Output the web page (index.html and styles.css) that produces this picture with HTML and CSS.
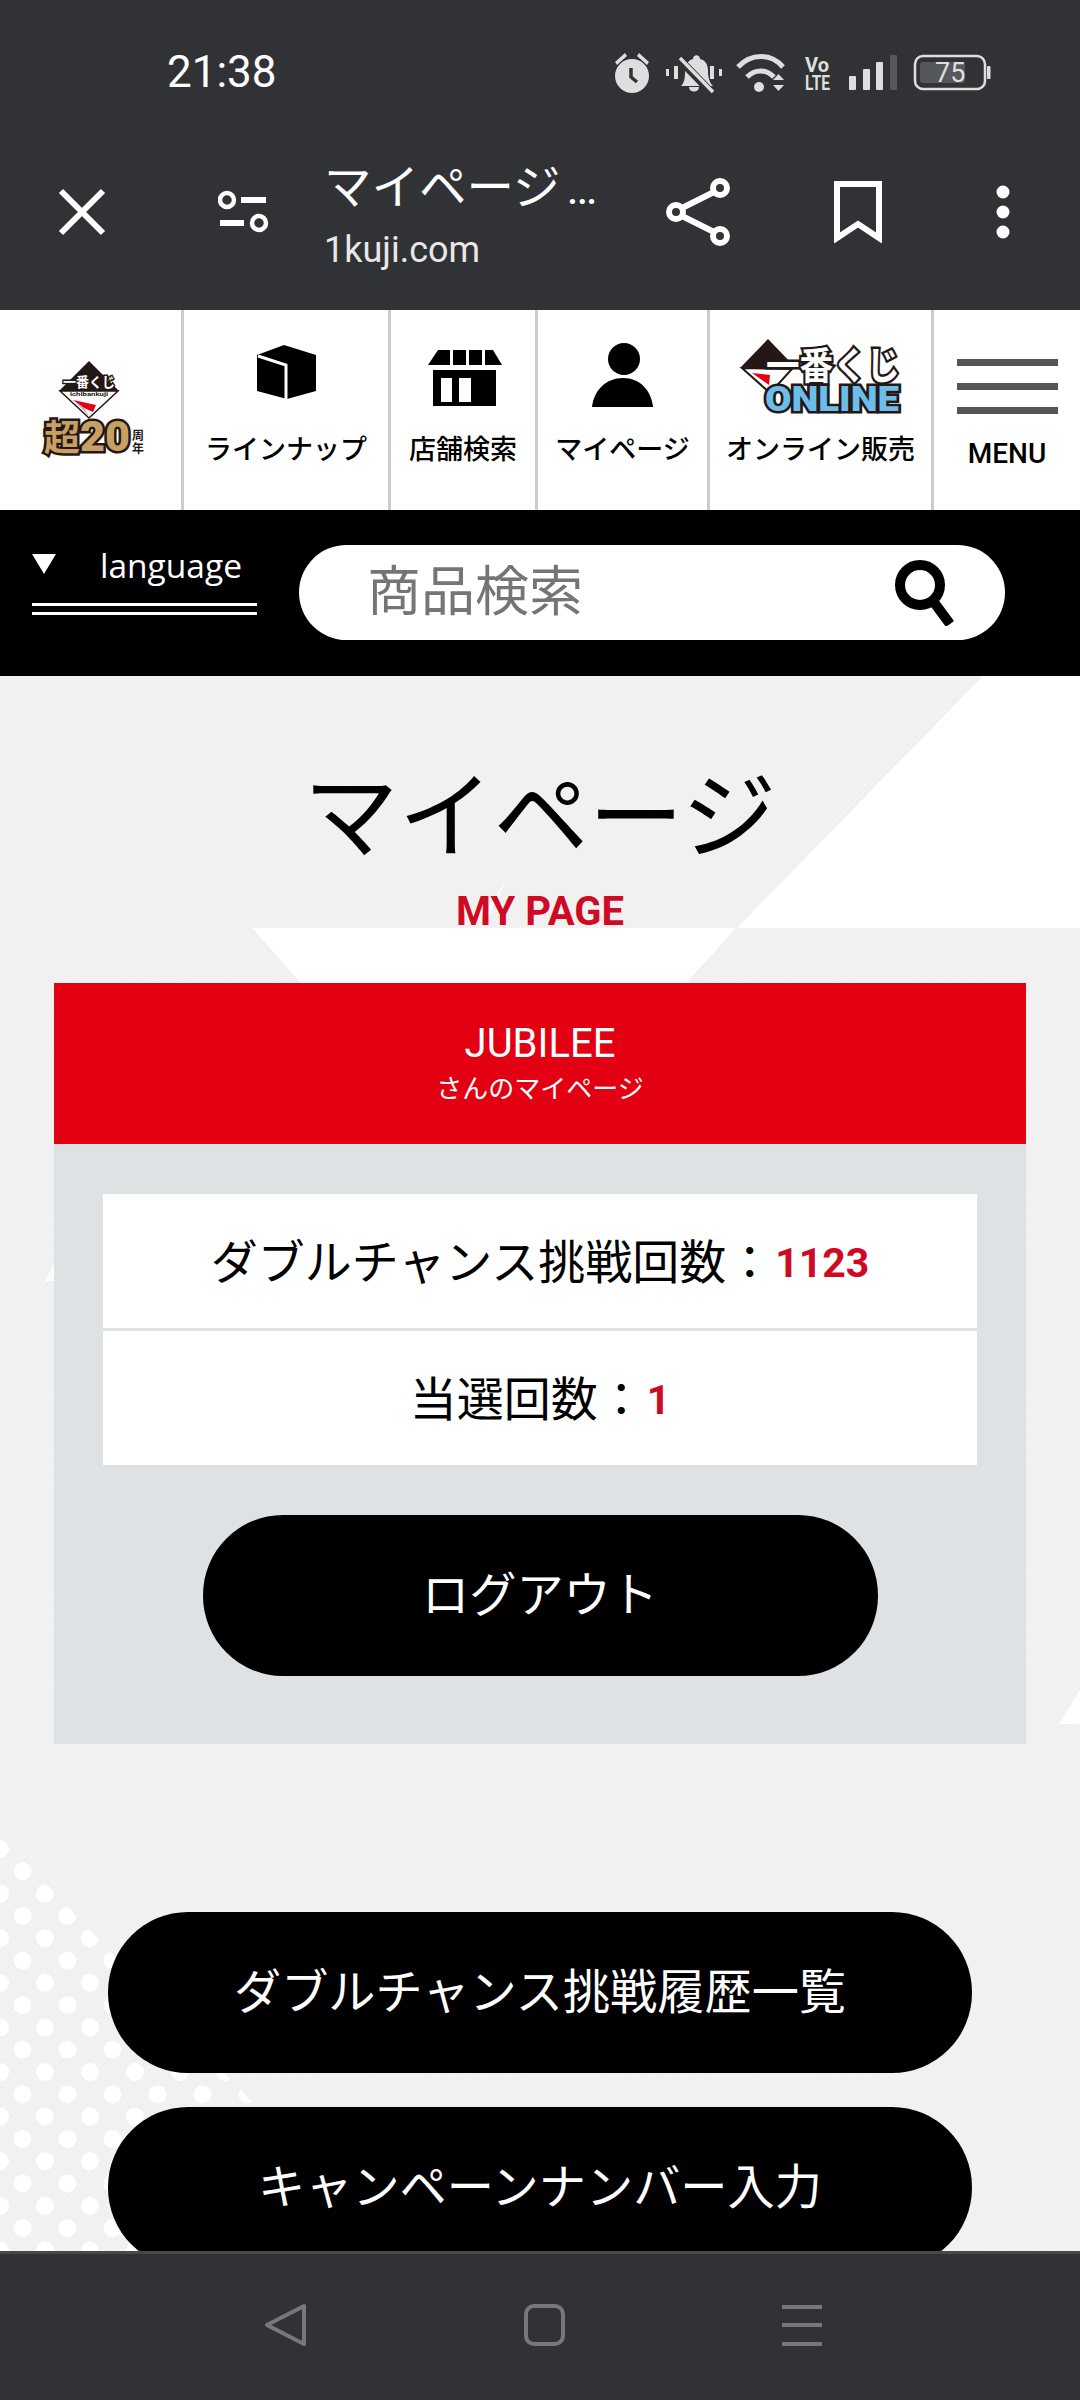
FILE: index.html
```html
<!DOCTYPE html>
<html lang="ja">
<head>
    <meta charset="UTF-8">
    <meta name="viewport" content="width=device-width, initial-scale=1.0">
    <title>マイページ</title>
    <link rel="stylesheet" href="styles.css">
</head>
<body>
    <!-- Phone status bar and browser toolbar -->
    <div class="chrome">
        <div class="status">
            <span class="time">21:38</span>
            <svg class="status-icons" width="400" height="50" viewBox="610 50 400 50">
                <g fill="#dedede">
                    <circle cx="632" cy="76" r="17"/>
                    <path d="M615 62l10-9 2 3-10 9zM649 62l-10-9-2 3 10 9z"/>
                    <path d="M631 68v9l6 5" fill="none" stroke="#313236" stroke-width="3.5"/>
                    <path d="M681 86c4-4 4-10 4-15 0-7 4-11 8-12 0-5 7-5 7 0 5 1 8 5 8 12 0 5 1 11 5 15z"/>
                    <path d="M689 87h10c0 6-10 6-10 0z"/>
                    <rect x="666" y="69" width="3" height="7"/><rect x="674" y="66" width="4" height="13"/>
                    <rect x="710" y="66" width="4" height="13"/><rect x="719" y="69" width="3" height="7"/>
                </g>
                <path d="M678 58l34 35" stroke="#313236" stroke-width="8"/>
                <path d="M680 58l33 34" stroke="#dedede" stroke-width="3.5"/>
                <g fill="none" stroke="#dedede" stroke-width="5">
                    <path d="M738 67c13-14 33-14 45 0"/>
                    <path d="M747 77c8-8 19-8 27 0"/>
                </g>
                <circle cx="759" cy="87" r="5" fill="#dedede"/>
                <path d="M773 80h11l-5.500-6zM773 85h11l-5.500 6z" fill="#dedede"/>
                <text class="volte" x="805" y="72" textLength="24" lengthAdjust="spacingAndGlyphs">Vo</text>
                <text class="volte" x="805" y="90" textLength="25" lengthAdjust="spacingAndGlyphs">LTE</text>
                <g fill="#dedede">
                    <rect x="849" y="76" width="7" height="14" rx="1"/>
                    <rect x="863" y="69" width="7" height="21" rx="1"/>
                    <rect x="876" y="62" width="7" height="28" rx="1"/>
                </g>
                <rect x="890" y="55" width="7" height="35" rx="1" fill="#56575a"/>
                <rect x="915" y="56" width="70" height="33" rx="8" fill="none" stroke="#dedede" stroke-width="2.500"/>
                <rect x="920" y="62" width="45" height="21" rx="3" fill="#56575a"/>
                <rect x="987" y="66" width="3.500" height="13" rx="1" fill="#dedede"/>
                <text class="battery-num" x="935" y="82">75</text>
            </svg>
        </div>
        <div class="toolbar">
            <svg class="tb-close" width="48" height="48" viewBox="0 0 48 48"><path d="M3 3l42 42M45 3L3 45" stroke="#fff" stroke-width="6" fill="none"/></svg>
            <svg class="tb-tune" width="54" height="44" viewBox="0 0 54 44" fill="none" stroke="#fff">
                <circle cx="9" cy="10" r="7" stroke-width="4.500"/>
                <path d="M23 10h25" stroke-width="6"/>
                <path d="M2 33h24" stroke-width="6"/>
                <circle cx="41" cy="33" r="7" stroke-width="4.500"/>
            </svg>
            <div class="tb-title">
                <div class="tb-page">マイページ<span class="tb-dots">…</span></div>
                <div class="tb-url">1kuji.com</div>
            </div>
            <svg class="tb-share" width="64" height="70" viewBox="0 0 64 70" fill="none" stroke="#fff" stroke-width="6">
                <circle cx="54" cy="11" r="7"/>
                <circle cx="10" cy="35" r="7"/>
                <circle cx="54" cy="59" r="7"/>
                <path d="M16 31l32-16M16 39l32 16"/>
            </svg>
            <svg class="tb-mark" width="48" height="62" viewBox="0 0 48 62"><path d="M3 3h42v54L24 43 3 57z" fill="none" stroke="#fff" stroke-width="6"/></svg>
            <svg class="tb-more" width="14" height="54" viewBox="0 0 14 54" fill="#fff">
                <circle cx="7" cy="7" r="6.500"/><circle cx="7" cy="27" r="6.500"/><circle cx="7" cy="47" r="6.500"/>
            </svg>
        </div>
    </div>

    <!-- Site header -->
    <nav class="site-nav">
        <a class="nav-cell nav-logo">
            <svg width="110" height="105" viewBox="35 355 110 105">
                <path d="M59 391l29 27 29-27z" fill="#fff" stroke="#231815" stroke-width="1.500"/>
                <path d="M88 361l30 30H58z" fill="#231815"/>
                <path d="M72 400l23 5-3 7-9-4z" fill="#e60012"/>
                <path d="M72 400l11 8 5 8z" fill="#b5b5b5"/>
                <text class="logo-jp" x="62" y="387" textLength="52" lengthAdjust="spacingAndGlyphs">一番くじ</text>
                <text class="logo-tiny" x="69" y="396" textLength="38" lengthAdjust="spacingAndGlyphs">ichibankuji</text>
                <text class="logo-gold logo-kanji" x="43" y="451" textLength="36" lengthAdjust="spacingAndGlyphs">超</text>
                <text class="logo-gold" x="79" y="451" textLength="50" lengthAdjust="spacingAndGlyphs">20</text>
                <text class="logo-small" x="131" y="440">周</text>
                <text class="logo-small" x="131" y="453">年</text>
            </svg>
        </a>
        <a class="nav-cell nav-line">
            <svg width="90" height="118" viewBox="241 310 90 118">
                <path d="M284 345l32 10v36l-29 8-30-8v-36z"/>
                <path d="M258 356l28 9v35" fill="none" stroke="#fff" stroke-width="3"/>
            </svg>
            <span class="nav-label">ラインナップ</span>
        </a>
        <a class="nav-cell nav-shop">
            <svg width="90" height="118" viewBox="418 310 90 118">
                <path d="M438 350h12v15h-22zM453 350h13v15h-13zM469 350h13v15h-13zM485 350h8l9 15h-17z"/>
                <path d="M433 370h63v36h-63zM441 378v24h11v-24zM459 378v24h12v-24z" fill-rule="evenodd"/>
            </svg>
            <span class="nav-label">店舗検索</span>
        </a>
        <a class="nav-cell nav-user">
            <svg width="90" height="118" viewBox="578 310 90 118">
                <circle cx="624" cy="359" r="16"/>
                <path d="M592 407c2-17 14-29 31-29 17 0 28 12 30 29z"/>
            </svg>
            <span class="nav-label">マイページ</span>
        </a>
        <a class="nav-cell nav-online">
            <svg width="180" height="118" viewBox="730 310 180 118">
                <path d="M767 339l27 28-27 3-27-3z" fill="#231815"/>
                <path d="M741 368l50 1-22 24z" fill="#fff" stroke="#231815" stroke-width="2"/>
                <path d="M751 373l18 2-1 10z" fill="#e60012"/>
                <text class="online-jp" x="765" y="379" textLength="134" lengthAdjust="spacingAndGlyphs">一番くじ</text>
                <text class="online-en" x="764" y="411" textLength="134" lengthAdjust="spacingAndGlyphs">ONLINE</text>
            </svg>
            <span class="nav-label">オンライン販売</span>
        </a>
        <a class="nav-cell nav-menu">
            <span class="menu-bars"><i></i><i></i><i></i></span>
            <span class="menu-label">MENU</span>
        </a>
    </nav>

    <div class="search-band">
        <div class="lang">
            <div class="lang-top"><span class="lang-arrow"></span><span class="lang-text">language</span></div>
            <div class="lang-lines"></div>
        </div>
        <div class="search-box">
            <span class="search-text">商品検索</span>
            <svg width="66" height="66" viewBox="0 0 66 66" fill="none" stroke="#000">
                <circle cx="27" cy="25" r="20" stroke-width="10"/>
                <path d="M40 41l17 23" stroke-width="10"/>
            </svg>
        </div>
    </div>

    <main class="content">
        <!-- White shapes and dots of the page background -->
        <svg class="bg-art" width="1080" height="1600" viewBox="0 676 1080 1600">
            <defs>
                <pattern id="dots" x="0" y="1840" width="45" height="44.600" patternUnits="userSpaceOnUse">
                    <circle cx="0" cy="9" r="9"/><circle cx="45" cy="9" r="9"/>
                    <circle cx="22.500" cy="31.300" r="9"/>
                </pattern>
            </defs>
            <g fill="#fff">
                <path d="M983 676h97v252H737z"/>
                <path d="M252 928h484l-50 55H301z"/>
                <path d="M506 880l-20 32 4 2z"/>
                <path d="M45 1281l9-17v17z"/>
                <path d="M1059 1724l21-34v34z"/>
            </g>
            <path class="bg-dots" d="M0 1835L255 2105 150 2105V2260H0z"/>
        </svg>

        <h1 class="page-title">マイページ</h1>
        <p class="page-sub">MY PAGE</p>

        <section class="card">
            <div class="card-head">
                <div class="user-name">JUBILEE</div>
                <div class="user-note">さんのマイページ</div>
            </div>
            <div class="card-body">
                <div class="stat">ダブルチャンス挑戦回数：<b>1123</b></div>
                <div class="stat">当選回数：<b>1</b></div>
                <a class="pill pill-logout">ログアウト</a>
            </div>
        </section>

        <div class="links">
            <a class="pill">ダブルチャンス挑戦履歴一覧</a>
            <a class="pill">キャンペーンナンバー入力</a>
        </div>
    </main>

    <!-- Phone navigation bar -->
    <div class="sys-nav">
        <svg width="44" height="44" viewBox="0 0 44 44" fill="none" stroke="#77787b" stroke-width="4" stroke-linejoin="round"><path d="M40 3v38L3 22z"/></svg>
        <svg width="44" height="44" viewBox="0 0 44 44" fill="none" stroke="#77787b" stroke-width="4"><rect x="4" y="3" width="37" height="38" rx="8"/></svg>
        <svg width="44" height="44" viewBox="0 0 44 44" stroke="#77787b" stroke-width="4"><path d="M2 4h40M2 22h40M2 41h40"/></svg>
    </div>
</body>
</html>
```

FILE: styles.css
```css
* {
    box-sizing: border-box;
}

html, body {
    margin: 0;
    padding: 0;
}

body {
    width: 1080px;
    height: 2400px;
    overflow: hidden;
    position: relative;
    font-family: "Noto Sans CJK JP", Roboto, sans-serif;
    color: #000;
    background-color: #f1f1f1;
}

/* Status bar and browser toolbar */
.chrome {
    height: 310px;
    background-color: #313236;
    color: #fff;
}

.status {
    height: 100px;
    display: flex;
    justify-content: space-between;
    align-items: flex-end;
    padding-left: 167px;
    padding-right: 70px;
}

.time {
    font-family: Roboto, sans-serif;
    font-size: 44px;
    line-height: 48px;
    margin-bottom: 4px;
}

.volte {
    font-family: Roboto, sans-serif;
    font-weight: 700;
    font-size: 20px;
    fill: #dedede;
}

.battery-num {
    font-family: Roboto, sans-serif;
    font-size: 27px;
    fill: #dedede;
}

.toolbar {
    height: 210px;
    display: flex;
    align-items: center;
    padding-left: 58px;
}

.tb-close {
    margin-right: 112px;
    margin-top: 14px;
}

.tb-tune {
    margin-right: 52px;
    margin-top: 14px;
}

.tb-title {
    width: 342px;
    align-self: flex-start;
    margin-top: 54px;
}

.tb-page {
    font-size: 47.500px;
    line-height: 60px;
    white-space: nowrap;
}

.tb-dots {
    font-family: Roboto, sans-serif;
    font-size: 46px;
    margin-left: 6px;
}

.tb-url {
    font-family: Roboto, sans-serif;
    font-size: 36px;
    line-height: 50px;
    margin-top: 7px;
    color: #e8e8e8;
}

.tb-share {
    margin-right: 104px;
    margin-top: 13px;
}

.tb-mark {
    margin-right: 114px;
    margin-top: 14px;
}

.tb-more {
    margin-top: 14px;
}

/* Site nav */
.site-nav {
    height: 200px;
    background-color: #fff;
    display: flex;
}

.nav-cell {
    display: flex;
    flex-direction: column;
    align-items: center;
    border-right: 3px solid #cccccc;
}

.nav-logo { width: 184px; justify-content: flex-start; padding-top: 45px; }
.nav-line { width: 207px; }
.nav-shop { width: 147px; }
.nav-user { width: 172px; }
.nav-online { width: 224px; }
.nav-menu { width: 146px; border-right: none; }

.nav-label {
    font-size: 27px;
    font-weight: 500;
    line-height: 40px;
    white-space: nowrap;
}

.logo-jp {
    font-size: 14px;
    font-weight: 700;
    fill: #fff;
    stroke: #231815;
    stroke-width: 3px;
    paint-order: stroke;
}

.logo-tiny {
    font-family: Roboto, sans-serif;
    font-size: 6px;
    font-weight: 700;
    fill: #231815;
}

.logo-gold {
    font-family: Roboto, "Noto Sans CJK JP", sans-serif;
    font-size: 42px;
    font-weight: 900;
    fill: #c9a063;
    stroke: #231815;
    stroke-width: 5px;
    paint-order: stroke;
}

.logo-kanji {
    font-family: "Noto Sans CJK JP", sans-serif;
    font-size: 36px;
    font-weight: 700;
}

.logo-small {
    font-size: 12px;
    font-weight: 700;
    fill: #231815;
}

.online-jp {
    font-size: 38px;
    font-weight: 700;
    fill: #fff;
    stroke: #231815;
    stroke-width: 5px;
    paint-order: stroke;
}

.online-en {
    font-family: Roboto, sans-serif;
    font-size: 35px;
    font-weight: 900;
    fill: #6cbde9;
    stroke: #231815;
    stroke-width: 5px;
    paint-order: stroke;
}

.menu-bars {
    width: 101px;
    display: flex;
    flex-direction: column;
    gap: 17px;
    margin-top: 49px;
}

.menu-bars i {
    display: block;
    height: 7px;
    background-color: #555;
}

.menu-label {
    font-family: Roboto, sans-serif;
    font-size: 28px;
    font-weight: 500;
    line-height: 32px;
    margin-top: 24px;
}

/* Language and search */
.search-band {
    height: 166px;
    background-color: #000;
    display: flex;
    align-items: flex-start;
    padding-left: 32px;
}

.lang {
    width: 225px;
    margin-top: 32px;
    margin-right: 42px;
}

.lang-top {
    display: flex;
    align-items: center;
    height: 46px;
}

.lang-arrow {
    width: 0;
    height: 0;
    border-left: 12.500px solid transparent;
    border-right: 12.500px solid transparent;
    border-top: 20px solid #fff;
    margin-right: 44px;
    margin-top: -2px;
}

.lang-text {
    font-family: "Open Sans", sans-serif;
    font-size: 33.500px;
    color: #fff;
}

.lang-lines {
    height: 12px;
    margin-top: 15px;
    border-top: 3px solid #fff;
    border-bottom: 3px solid #fff;
}

.search-box {
    width: 706px;
    height: 95px;
    margin-top: 35px;
    background-color: #fff;
    border-radius: 48px;
    display: flex;
    align-items: center;
    justify-content: space-between;
    padding-left: 68px;
    padding-right: 46px;
}

.search-text {
    font-size: 54px;
    line-height: 60px;
    color: #757575;
    margin-bottom: 10px;
}

/* Main content */
.content {
    position: relative;
    height: 1600px;
    padding-top: 84px;
    background-image: repeating-linear-gradient(135deg, #f2f2f2 0, #f2f2f2 2px, #f0f0f0 2px, #f0f0f0 4px);
}

.bg-art {
    position: absolute;
    left: 0;
    top: 0;
}

.bg-dots {
    fill: url(#dots);
}

#dots circle {
    fill: #fff;
}

.page-title {
    position: relative;
    margin: 0;
    text-align: center;
    font-size: 95px;
    font-weight: 400;
    line-height: 100px;
}

.page-sub {
    position: relative;
    margin: 32px 0 51px;
    text-align: center;
    font-family: Roboto, sans-serif;
    font-size: 40px;
    font-weight: 700;
    line-height: 40px;
    color: #cf0a24;
}

.card {
    position: relative;
    margin: 0 54px;
    background-color: #dfe2e5;
}

.card-head {
    height: 161px;
    background-color: #e30012;
    color: #fff;
    display: flex;
    flex-direction: column;
    align-items: center;
    padding-top: 39px;
}

.user-name {
    font-family: Roboto, sans-serif;
    font-size: 40px;
    line-height: 44px;
}

.user-note {
    font-size: 26px;
    line-height: 36px;
    margin-top: 3px;
}

.card-body {
    display: flex;
    flex-direction: column;
    align-items: center;
    gap: 3px;
    padding: 50px 49px 68px;
}

.stat {
    width: 100%;
    height: 134px;
    background-color: #fff;
    display: flex;
    align-items: center;
    justify-content: center;
    font-size: 47px;
    padding-bottom: 6px;
}

.stat b {
    font-family: Roboto, sans-serif;
    font-size: 41px;
    font-weight: 700;
    color: #cf0a24;
    margin-top: 10px;
    margin-left: 2px;
}

.pill {
    display: flex;
    align-items: center;
    justify-content: center;
    width: 864px;
    height: 161px;
    border-radius: 80px;
    background-color: #000;
    color: #fff;
    font-size: 47.200px;
    padding-bottom: 8px;
}

.pill-logout {
    width: 675px;
    margin-top: 47px;
}

.links {
    position: relative;
    margin-top: 168px;
    display: flex;
    flex-direction: column;
    align-items: center;
    gap: 34px;
}

/* Phone nav */
.sys-nav {
    position: absolute;
    left: 0;
    bottom: 0;
    width: 100%;
    height: 149px;
    background-color: #313236;
    border-top: 3px solid #47484c;
    display: flex;
    justify-content: space-between;
    padding: 49px 256px 0 264px;
}
```
